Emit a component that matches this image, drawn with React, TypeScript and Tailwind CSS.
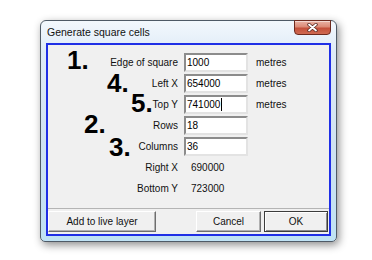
const rows = [
  { label: "Edge of square", value: "1000", unit: "metres" },
  { label: "Left X", value: "654000", unit: "metres" },
  { label: "Top Y", value: "741000", unit: "metres", caret: true },
  { label: "Rows", value: "18" },
  { label: "Columns", value: "36" },
];

const readouts = [
  { label: "Right X", value: "690000" },
  { label: "Bottom Y", value: "723000" },
];

// big step numbers drawn over the form
const marks = [
  { n: "1.", cls: "left-[19px] top-[2px]" },
  { n: "4.", cls: "left-[59px] top-[25px]" },
  { n: "5.", cls: "left-[83px] top-[45px]" },
  { n: "2.", cls: "left-[36px] top-[66px]" },
  { n: "3.", cls: "left-[61px] top-[89px]" },
];

export default function App() {
  return (
    <div className="w-[372px] h-[260px] bg-white pt-[20px] pl-[40px] font-['Liberation_Sans',Arial,sans-serif] text-[10px] text-[#111]">
      <div className="w-[297px] h-[222px] flex flex-col rounded-t-[6px] rounded-b-[5px] border border-[#4f5a66] bg-[linear-gradient(180deg,#f3f8fd_0%,#dfebf7_14%,#d0e2f2_55%,#bfe2f4_100%)] shadow-[2px_3px_9px_rgba(0,0,0,0.45)] px-[5px] pb-[5px]">
        {/* title bar */}
        <div className="h-[22px] flex items-start justify-between">
          <span className="pl-[1px] pt-[5px] text-[10.5px] leading-[12px] text-[#111]">Generate square cells</span>
          <div className="-mt-[1px] w-[37px] h-[15px] rounded-b-[4px] border border-[#6d2a1e] bg-[linear-gradient(180deg,#eab3a5_0%,#dc8a76_45%,#c4503a_55%,#cf6a52_100%)] flex items-center justify-center shadow-[inset_0_1px_0_rgba(255,255,255,0.5)]">
            <svg width="11" height="9" viewBox="0 0 11 9">
              <path d="M2 1.5 L9 7.5 M9 1.5 L2 7.5" stroke="#5a2a22" strokeWidth="3.4" strokeLinecap="round" />
              <path d="M2 1.5 L9 7.5 M9 1.5 L2 7.5" stroke="#ffffff" strokeWidth="1.8" strokeLinecap="round" />
            </svg>
          </div>
        </div>

        {/* client area */}
        <div className="h-[193px] border-2 border-[#1f2fe6] bg-[#f0f0f0] flex flex-col">
          <div className="relative flex-1 flex flex-col pt-[8px]">
            <div className="grid grid-cols-[130px_64px_auto] gap-x-[6px] gap-y-[2px] items-center">
              {rows.map((r) => (
                <div key={r.label} className="contents">
                  <span className="text-right leading-[19px]">{r.label}</span>
                  <div className="h-[19px] bg-white border-2 border-t-[#8c8c8c] border-l-[#8c8c8c] border-b-[#e3e3e3] border-r-[#e3e3e3] pl-[1px] flex items-center text-black">
                    {r.value}
                    {r.caret && <span className="ml-[1px] w-px h-[13px] bg-black" />}
                  </div>
                  <span className="pl-[2px]">{r.unit ?? ""}</span>
                </div>
              ))}
              {readouts.map((r) => (
                <div key={r.label} className="contents">
                  <span className="text-right leading-[19px]">{r.label}</span>
                  <span className="pl-[7px] leading-[19px]">{r.value}</span>
                  <span />
                </div>
              ))}
            </div>

            {marks.map((m) => (
              <span
                key={m.n}
                className={`absolute ${m.cls} text-[26px] leading-none font-bold text-black`}
              >
                {m.n}
              </span>
            ))}

            <div className="mt-auto h-px bg-[#b4b4b4]" />
            <div className="mt-[2px] mb-[2px] mr-[1px] flex h-[21px] gap-[3px]">
              <button className="w-[108px] bg-[#f0f0f0] border border-t-white border-l-white border-b-[#6e6e6e] border-r-[#6e6e6e] shadow-[inset_-1px_-1px_0_#b0b0b0] text-[10px]">
                Add to live layer
              </button>
              <div className="flex-1" />
              <button className="w-[65px] bg-[#f0f0f0] border border-t-white border-l-white border-b-[#6e6e6e] border-r-[#6e6e6e] shadow-[inset_-1px_-1px_0_#b0b0b0] text-[10px]">
                Cancel
              </button>
              <button className="w-[64px] bg-[#f0f0f0] border border-[#3c3c3c] shadow-[inset_1px_1px_0_#fff,inset_-1px_-1px_0_#8a8a8a] text-[10px]">
                OK
              </button>
            </div>
          </div>
        </div>
      </div>
    </div>
  );
}
